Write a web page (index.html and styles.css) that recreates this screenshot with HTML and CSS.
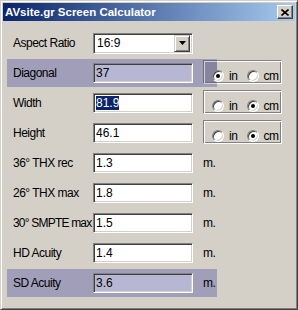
FILE: index.html
```html
<!DOCTYPE html>
<html lang="en">
<head>
    <meta charset="UTF-8">
    <title>AVsite.gr Screen Calculator</title>
    <link rel="stylesheet" href="styles.css">
</head>
<body>

    <div class="window">
        <div class="titlebar">
            <span class="title">AVsite.gr Screen Calculator</span>
            <button class="close">
                <svg width="8" height="7" viewBox="0 0 8 7"><path d="M0.5 0.5 L7.5 6.5 M7.5 0.5 L0.5 6.5" stroke="#000" stroke-width="1.6" fill="none"/></svg>
            </button>
        </div>

        <div class="content">
            <div class="row">
                <label class="lbl">Aspect Ratio</label>
                <div class="select">
                    <span class="value">16:9</span>
                    <span class="drop"><svg width="7" height="4" viewBox="0 0 7 4"><path d="M0 0 H7 L3.5 4 Z" fill="#000"/></svg></span>
                </div>
            </div>

            <div class="row hl">
                <label class="lbl">Diagonal</label>
                <div class="field">37</div>
                <div class="units">
                    <span class="opt"><span class="radio on"></span>in</span>
                    <span class="opt"><span class="radio"></span>cm</span>
                </div>
            </div>

            <div class="row">
                <label class="lbl">Width</label>
                <div class="field"><span class="sel">81.9</span></div>
                <div class="units">
                    <span class="opt"><span class="radio"></span>in</span>
                    <span class="opt"><span class="radio on"></span>cm</span>
                </div>
            </div>

            <div class="row">
                <label class="lbl">Height</label>
                <div class="field">46.1</div>
                <div class="units">
                    <span class="opt"><span class="radio"></span>in</span>
                    <span class="opt"><span class="radio on"></span>cm</span>
                </div>
            </div>

            <div class="row">
                <label class="lbl">36° THX rec</label>
                <div class="field">1.3</div>
                <span class="unit-m">m.</span>
            </div>

            <div class="row">
                <label class="lbl">26° THX max</label>
                <div class="field">1.8</div>
                <span class="unit-m">m.</span>
            </div>

            <div class="row">
                <label class="lbl tight">30° SMPTE max</label>
                <div class="field">1.5</div>
                <span class="unit-m">m.</span>
            </div>

            <div class="row">
                <label class="lbl">HD Acuity</label>
                <div class="field">1.4</div>
                <span class="unit-m">m.</span>
            </div>

            <div class="row hl">
                <label class="lbl">SD Acuity</label>
                <div class="field">3.6</div>
                <span class="unit-m">m.</span>
            </div>
        </div>
    </div>

</body>
</html>
```

FILE: styles.css
```css
:root {
    --face: #d4d0c8;
    --shadow: #808080;
    --dark: #404040;
    --light: #ffffff;
    --band: #a09eb8;
}

body {
    margin: 0;
    background: var(--face);
    font-family: "Liberation Sans", Arial, sans-serif;
    color: #000;
}

/* Window frame */
.window {
    width: 298px;
    height: 310px;
    box-sizing: border-box;
    background: var(--face);
    border: 1px solid;
    border-color: var(--face) var(--dark) var(--dark) var(--face);
    box-shadow: inset 1px 1px var(--light), inset -1px -1px var(--shadow);
    padding: 2px;
}

.titlebar {
    height: 18px;
    display: flex;
    align-items: center;
    justify-content: space-between;
    padding: 0 2px;
    background: linear-gradient(to right, #0a246a, #a6caf0);
    color: #fff;
}

.title {
    font-weight: bold;
    font-size: 11.5px;
}

.close {
    width: 16px;
    height: 14px;
    padding: 0;
    box-sizing: border-box;
    background: var(--face);
    border: 1px solid;
    border-color: var(--light) var(--dark) var(--dark) var(--light);
    box-shadow: inset -1px -1px var(--shadow);
    display: flex;
    align-items: center;
    justify-content: center;
}

/* Form rows */
.content {
    padding: 7px 0 0 4px;
}

.row {
    position: relative;
    isolation: isolate;
    height: 30px;
    display: flex;
    align-items: center;
}

.lbl {
    width: 80px;
    padding-left: 6px;
    font-size: 12px;
    letter-spacing: -0.5px;
    white-space: nowrap;
}

.lbl.tight {
    letter-spacing: -0.8px;
}

.field {
    width: 100px;
    height: 20px;
    box-sizing: border-box;
    background: #fff;
    border: 1px solid;
    border-color: var(--shadow) var(--light) var(--light) var(--shadow);
    box-shadow: inset 1px 1px var(--dark), inset -1px -1px var(--face);
    padding-left: 2px;
    font-size: 12px;
    line-height: 18px;
}

.sel {
    background: #0a246a;
    color: #fff;
}

.select {
    width: 100px;
    height: 21px;
    box-sizing: border-box;
    display: flex;
    align-items: center;
    background: #fff;
    border: 1px solid;
    border-color: var(--shadow) var(--light) var(--light) var(--shadow);
    box-shadow: inset 1px 1px var(--dark), inset -1px -1px var(--face);
    padding: 2px;
    font-size: 12px;
}

.select .value {
    flex: 1;
    padding-left: 1px;
}

.drop {
    width: 16px;
    height: 17px;
    box-sizing: border-box;
    background: var(--face);
    border: 1px solid;
    border-color: var(--face) var(--dark) var(--dark) var(--face);
    box-shadow: inset 1px 1px var(--light), inset -1px -1px var(--shadow);
    display: flex;
    align-items: center;
    justify-content: center;
}

/* in / cm group */
.units {
    position: relative;
    align-self: flex-start;
    margin: 2px 0 0 10px;
    width: 79px;
    height: 24px;
    box-sizing: border-box;
    border: 1px solid;
    border-color: var(--shadow) var(--light) var(--light) var(--shadow);
    box-shadow: inset 1px 1px var(--light), inset -1px -1px var(--shadow);
    display: flex;
    align-items: center;
    padding: 7px 0 0 8px;
}

.opt {
    width: 36px;
    display: flex;
    align-items: center;
    gap: 5px;
    font-size: 12px;
    letter-spacing: -0.5px;
}

.radio {
    position: relative;
    width: 12px;
    height: 12px;
    box-sizing: border-box;
    border-radius: 50%;
    background: #fff;
    border: 1px solid;
    border-color: var(--shadow) var(--light) var(--light) var(--shadow);
    box-shadow: inset 1px 1px var(--dark), inset -1px -1px var(--face);
}

.radio.on::after {
    content: "";
    position: absolute;
    left: 3px;
    top: 3px;
    width: 4px;
    height: 4px;
    border-radius: 50%;
    background: #000;
}

.unit-m {
    margin-left: 10px;
    font-size: 12px;
    letter-spacing: -0.5px;
}

/* highlighted rows */
.hl::before {
    content: "";
    position: absolute;
    z-index: -1;
    left: 0;
    top: 1px;
    bottom: 1px;
    width: 210px;
    background: var(--band);
}

.hl .field {
    background: #b8b7d3;
}

.hl .units::before {
    content: "";
    position: absolute;
    left: -1px;
    top: -1px;
    bottom: -1px;
    width: 14px;
    background: rgba(40, 40, 80, 0.22);
}
```
